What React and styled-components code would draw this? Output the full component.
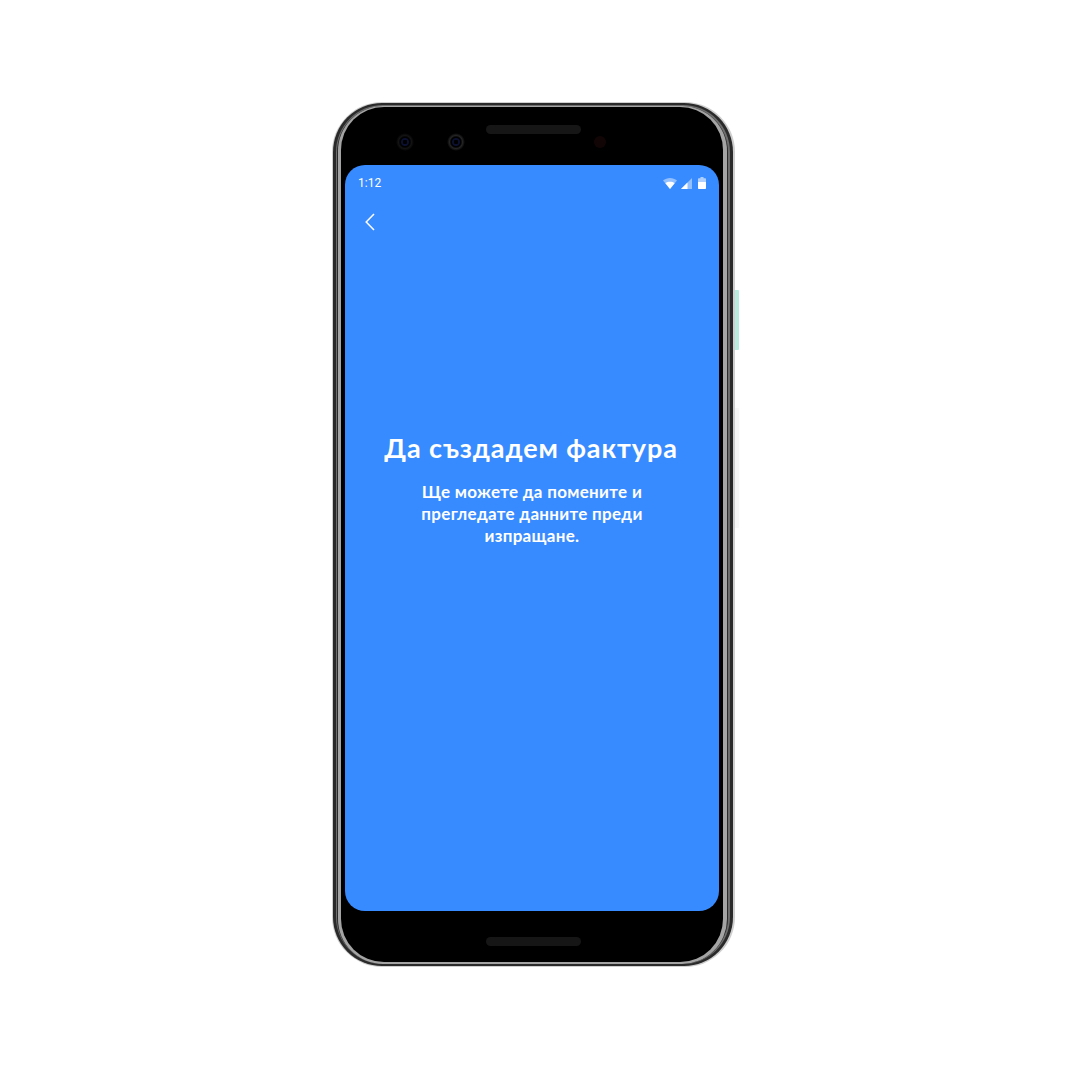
import React from 'react';
import styled, {createGlobalStyle} from 'styled-components';

const GlobalStyle = createGlobalStyle`
  html, body {
    margin: 0;
    padding: 0;
    background: #fff;
  }
`;

const WifiIcon = () => (
  <svg width="14" height="11" viewBox="0 0 14 11">
    <path d="M0 2.6C3.8-.8 10.2-.8 14 2.6L7 11z" fill="#fff" fillOpacity="0.45" />
    <path d="M2.4 5.2C5 3.4 9 3.4 11.6 5.2L7 11z" fill="#fff" />
  </svg>
);

const SignalIcon = () => (
  <svg width="11" height="11" viewBox="0 0 11 11">
    <path d="M0 11L11 0v11z" fill="#fff" fillOpacity="0.45" />
    <path d="M0 11L6.5 4.5V11z" fill="#fff" />
  </svg>
);

const BatteryIcon = () => (
  <svg width="8" height="12" viewBox="0 0 8 12">
    <path d="M2.5 0h3v1.2H7c.6 0 1 .4 1 1V5H0V2.2c0-.6.4-1 1-1h1.5z" fill="#fff" fillOpacity="0.6" />
    <path d="M0 5h8v6c0 .6-.4 1-1 1H1c-.6 0-1-.4-1-1z" fill="#fff" />
  </svg>
);

const BackIcon = () => (
  <svg width="10" height="18" viewBox="0 0 10 18">
    <path d="M9 1L1.2 9 9 17" fill="none" stroke="#fff" strokeWidth="1.5" />
  </svg>
);

export default function App() {
  return (
    <Page>
      <GlobalStyle />
      <Device>
        <SideButton $top={188} $height={60} $color="#b5eedd" />
        <SideButton $top={306} $height={120} $color="#f8f8f8" />
        <Ring $color="#cfcfcf" $pad="1px 2px 1px 1px" $radius={50}>
          <Ring $color="#2a2a2a" $pad="2px 3px 2px 3px" $radius={49}>
            <Ring $color="#6e6e6e" $pad="1px 2px 0 1px" $radius={47}>
              <Ring $color="#2a2a2a" $pad="0 1px 0 1px" $radius={46}>
                <Ring $color="#a4a4a4" $pad="1px 4px 2px 3px" $radius={45}>
                  <Bezel>
                    <TopBar>
                      <Speaker />
                      <Sensors>
                        <Camera />
                        <Camera $bright />
                        <Proximity />
                      </Sensors>
                    </TopBar>
                    <Screen>
                      <StatusBar>
                        <Clock>1:12</Clock>
                        <StatusIcons>
                          <WifiIcon />
                          <SignalIcon />
                          <BatteryIcon />
                        </StatusIcons>
                      </StatusBar>
                      <BackButton>
                        <BackIcon />
                      </BackButton>
                      <Intro>
                        <Title>Да създадем фактура</Title>
                        <Subtitle>
                          Ще можете да помените и
                          <br />
                          прегледате данните преди
                          <br />
                          изпращане.
                        </Subtitle>
                      </Intro>
                    </Screen>
                    <BottomBar>
                      <Speaker />
                    </BottomBar>
                  </Bezel>
                </Ring>
              </Ring>
            </Ring>
          </Ring>
        </Ring>
      </Device>
    </Page>
  );
}

const Page = styled.div`
  width: 1070px;
  height: 1070px;
  box-sizing: border-box;
  padding: 102px 0 0 332px;
  background: #fff;
  overflow: hidden;
`;

const Device = styled.div`
  position: relative;
  width: 403px;
`;

const SideButton = styled.div`
  position: absolute;
  top: ${(p) => p.$top}px;
  right: -4px;
  width: 4px;
  height: ${(p) => p.$height}px;
  background: ${(p) => p.$color};
  border-radius: 0 1px 1px 0;
`;

const Ring = styled.div`
  padding: ${(p) => p.$pad};
  background: ${(p) => p.$color};
  border-radius: ${(p) => p.$radius}px;
`;

const Bezel = styled.div`
  display: flex;
  flex-direction: column;
  padding: 0 4px;
  background: #000;
  border-radius: 43px;
`;

const TopBar = styled.div`
  height: 58px;
  display: flex;
  flex-direction: column;
  align-items: center;
  padding-top: 18px;
  box-sizing: border-box;
`;

const Speaker = styled.div`
  flex: none;
  width: 95px;
  height: 9px;
  margin-left: 3px;
  background: #161616;
  border-radius: 5px;
`;

const Sensors = styled.div`
  align-self: flex-start;
  display: flex;
  align-items: center;
  margin: -1px 0 0 51px;
`;

const Camera = styled.div`
  width: 18px;
  height: 18px;
  margin-right: ${(p) => (p.$bright ? 129 : 33)}px;
  border-radius: 50%;
  background: radial-gradient(
    circle,
    #000 0 2px,
    #0b1030 2.5px 3.5px,
    #000 4.5px 5px,
    ${(p) => (p.$bright ? '#242424' : '#131313')} 6.5px,
    #000 9px
  );
`;

const Proximity = styled.div`
  width: 12px;
  height: 12px;
  border-radius: 50%;
  background: #120505;
`;

const Screen = styled.div`
  height: 746px;
  display: flex;
  flex-direction: column;
  background: #388bff;
  border-radius: 20px;
  color: #fff;
`;

const StatusBar = styled.div`
  display: flex;
  align-items: center;
  height: 36px;
  padding: 0 13px;
`;

const Clock = styled.span`
  margin-right: auto;
  font: 400 12px 'Roboto', sans-serif;
`;

const StatusIcons = styled.div`
  display: flex;
  align-items: center;
  gap: 4px;
  svg:last-child {
    margin-left: 2px;
  }
`;

const BackButton = styled.div`
  display: flex;
  height: 18px;
  margin: 12px 0 0 20px;
`;

const Intro = styled.div`
  display: flex;
  flex-direction: column;
  align-items: center;
  margin-top: 200px;
`;

const Title = styled.h1`
  margin: 0 2px 0 0;
  font: 700 27px/34px 'Lato', 'Noto Sans', sans-serif;
  letter-spacing: 0.9px;
`;

const Subtitle = styled.p`
  margin: 16px 0 0;
  font: 700 17px/22px 'Lato', 'Noto Sans', sans-serif;
  letter-spacing: 0.3px;
  text-align: center;
`;

const BottomBar = styled.div`
  height: 51px;
  display: flex;
  justify-content: center;
  padding-top: 26px;
  box-sizing: border-box;
`;
